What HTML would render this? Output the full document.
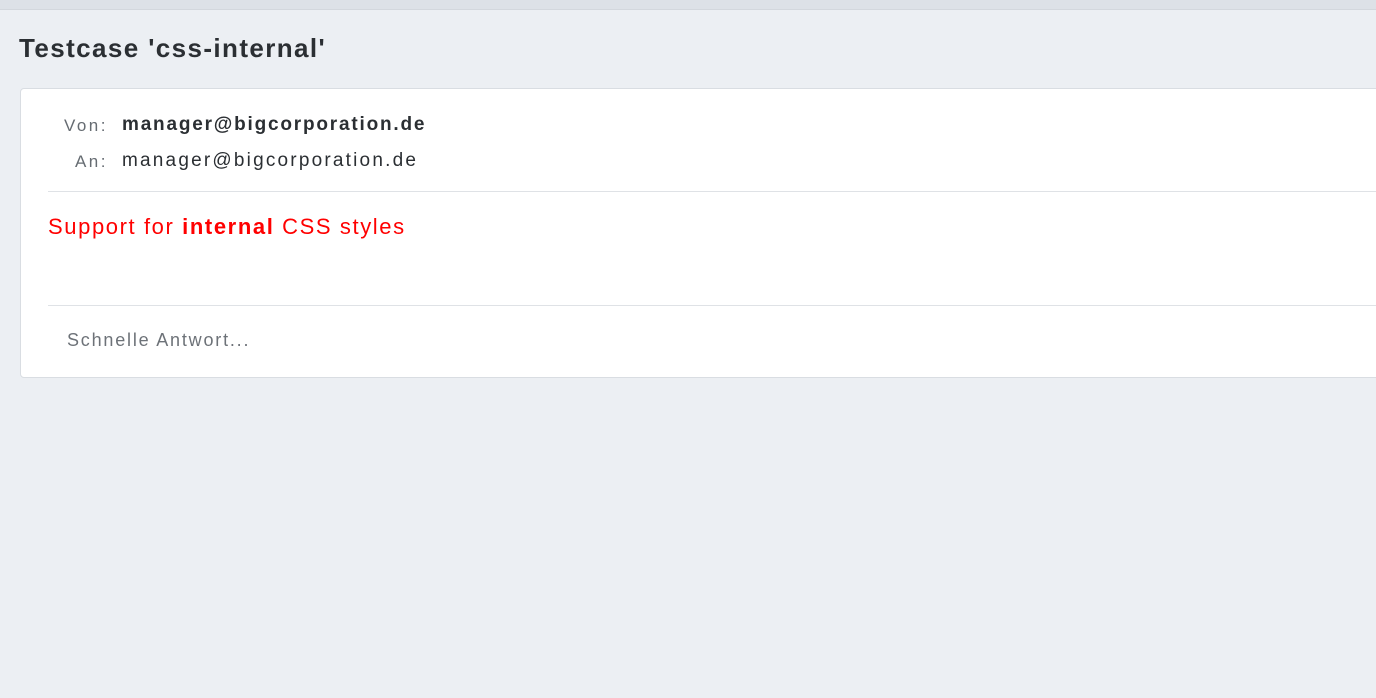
<!DOCTYPE html>
<html><head><style>
body{margin:0;width:1376px;height:698px;background:#eceff3;font-family:"Liberation Sans",sans-serif;overflow:hidden;position:relative}
.top{position:absolute;left:0;top:0;width:1376px;height:9px;background:#dde1e7;border-bottom:1px solid #d3d7dd}
h1{position:absolute;left:19px;top:33px;margin:0;font-size:26px;font-weight:bold;color:#2b2f33;letter-spacing:1.4px;white-space:nowrap}
.card{position:absolute;left:20px;top:88px;width:1370px;height:288px;background:#fff;border:1px solid #d9dde2;border-radius:4px}
.lbl{position:absolute;font-size:17px;color:#666c72;text-align:right;width:87px;left:0;letter-spacing:2.5px}
.val{position:absolute;left:101px;font-size:19px;color:#2b2f33;white-space:nowrap}
.hr{position:absolute;left:27px;right:0;height:1px;background:#dfe2e6}
.msg{position:absolute;left:27px;top:125px;font-size:22px;color:#ff0000;letter-spacing:1.6px;white-space:nowrap}
.rep{position:absolute;left:46px;top:241px;font-size:18px;color:#6d7278;letter-spacing:1.8px}
</style></head><body>
<div class="top"></div>
<h1>Testcase 'css-internal'</h1>
<div class="card">
<div class="lbl" style="top:27px">Von:</div><div class="val" style="top:25px;font-weight:bold;letter-spacing:1.8px">manager@bigcorporation.de</div>
<div class="lbl" style="top:63px">An:</div><div class="val" style="top:61px;letter-spacing:2.2px">manager@bigcorporation.de</div>
<div class="hr" style="top:102px"></div>
<div class="msg">Support for <b>internal</b> CSS styles</div>
<div class="hr" style="top:216px"></div>
<div class="rep">Schnelle Antwort...</div>
</div>
</body></html>
